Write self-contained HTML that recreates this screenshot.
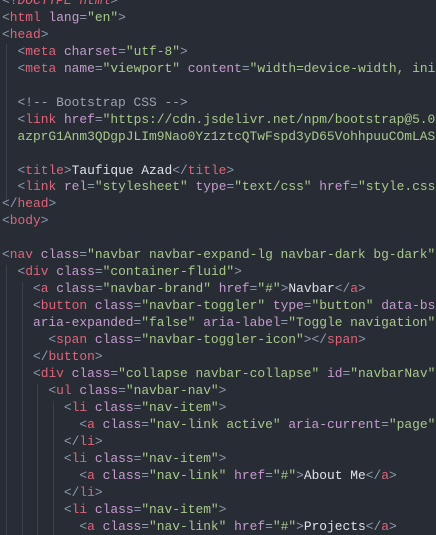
<!DOCTYPE html>
<html><head><meta charset="utf-8"><style>
html,body{margin:0;padding:0;background:#282c34;width:436px;height:535px;overflow:hidden}
pre{margin:0;position:absolute;left:2px;top:-7px;width:434px;height:542px;overflow:hidden;font-family:"Liberation Mono","DejaVu Sans Mono",monospace;font-size:12.9px;line-height:16.95px;color:#d7dae0;white-space:pre}
.b{color:#8e9bb0}.t{color:#e0647a}.a{color:#c59bd0}.s{color:#a8c98c}.c{color:#9aa3b0}.x{color:#dfe3e8}
.g{position:absolute;width:1px;background:#3c424c}
</style></head><body>
<div class="g" style="left:6px;top:44px;height:161px"></div>
<div class="g" style="left:6px;top:265px;height:270px"></div>
<div class="g" style="left:22px;top:282px;height:253px"></div>
<div class="g" style="left:37px;top:384px;height:151px"></div>
<div class="g" style="left:53px;top:401px;height:134px"></div>
<pre><span class="b">&lt;!</span><span class="t" style="font-style:italic">DOCTYPE html</span><span class="b">&gt;</span>
<span class="b">&lt;</span><span class="t">html</span> <span class="a">lang</span><span class="b">=</span><span class="s">"en"</span><span class="b">&gt;</span>
<span class="b">&lt;</span><span class="t">head</span><span class="b">&gt;</span>
  <span class="b">&lt;</span><span class="t">meta</span> <span class="a">charset</span><span class="b">=</span><span class="s">"utf-8"</span><span class="b">&gt;</span>
  <span class="b">&lt;</span><span class="t">meta</span> <span class="a">name</span><span class="b">=</span><span class="s">"viewport"</span> <span class="a">content</span><span class="b">=</span><span class="s">"width=device-width, initial-scale=1"</span>

  <span class="c">&lt;!-- Bootstrap CSS --&gt;</span>
  <span class="b">&lt;</span><span class="t">link</span> <span class="a">href</span><span class="b">=</span><span class="s">"https://cdn.jsdelivr.net/npm/bootstrap@5.0.2/dist</span>
<span class="s">  azprG1Anm3QDgpJLIm9Nao0Yz1ztcQTwFspd3yD65VohhpuuCOmLASjC</span>

  <span class="b">&lt;</span><span class="t">title</span><span class="b">&gt;</span><span class="x">Taufique Azad</span><span class="b">&lt;/</span><span class="t">title</span><span class="b">&gt;</span>
  <span class="b">&lt;</span><span class="t">link</span> <span class="a">rel</span><span class="b">=</span><span class="s">"stylesheet"</span> <span class="a">type</span><span class="b">=</span><span class="s">"text/css"</span> <span class="a">href</span><span class="b">=</span><span class="s">"style.css"</span><span class="b">&gt;</span>
<span class="b">&lt;/</span><span class="t">head</span><span class="b">&gt;</span>
<span class="b">&lt;</span><span class="t">body</span><span class="b">&gt;</span>

<span class="b">&lt;</span><span class="t">nav</span> <span class="a">class</span><span class="b">=</span><span class="s">"navbar navbar-expand-lg navbar-dark bg-dark"</span><span class="b">&gt;</span>
  <span class="b">&lt;</span><span class="t">div</span> <span class="a">class</span><span class="b">=</span><span class="s">"container-fluid"</span><span class="b">&gt;</span>
    <span class="b">&lt;</span><span class="t">a</span> <span class="a">class</span><span class="b">=</span><span class="s">"navbar-brand"</span> <span class="a">href</span><span class="b">=</span><span class="s">"#"</span><span class="b">&gt;</span><span class="x">Navbar</span><span class="b">&lt;/</span><span class="t">a</span><span class="b">&gt;</span>
    <span class="b">&lt;</span><span class="t">button</span> <span class="a">class</span><span class="b">=</span><span class="s">"navbar-toggler"</span> <span class="a">type</span><span class="b">=</span><span class="s">"button"</span> <span class="a">data-bs-toggle</span>
    <span class="a">aria-expanded</span><span class="b">=</span><span class="s">"false"</span> <span class="a">aria-label</span><span class="b">=</span><span class="s">"Toggle navigation"</span><span class="b">&gt;</span>
      <span class="b">&lt;</span><span class="t">span</span> <span class="a">class</span><span class="b">=</span><span class="s">"navbar-toggler-icon"</span><span class="b">&gt;&lt;/</span><span class="t">span</span><span class="b">&gt;</span>
    <span class="b">&lt;/</span><span class="t">button</span><span class="b">&gt;</span>
    <span class="b">&lt;</span><span class="t">div</span> <span class="a">class</span><span class="b">=</span><span class="s">"collapse navbar-collapse"</span> <span class="a">id</span><span class="b">=</span><span class="s">"navbarNav"</span><span class="b">&gt;</span>
      <span class="b">&lt;</span><span class="t">ul</span> <span class="a">class</span><span class="b">=</span><span class="s">"navbar-nav"</span><span class="b">&gt;</span>
        <span class="b">&lt;</span><span class="t">li</span> <span class="a">class</span><span class="b">=</span><span class="s">"nav-item"</span><span class="b">&gt;</span>
          <span class="b">&lt;</span><span class="t">a</span> <span class="a">class</span><span class="b">=</span><span class="s">"nav-link active"</span> <span class="a">aria-current</span><span class="b">=</span><span class="s">"page"</span> <span class="a">href</span>
        <span class="b">&lt;/</span><span class="t">li</span><span class="b">&gt;</span>
        <span class="b">&lt;</span><span class="t">li</span> <span class="a">class</span><span class="b">=</span><span class="s">"nav-item"</span><span class="b">&gt;</span>
          <span class="b">&lt;</span><span class="t">a</span> <span class="a">class</span><span class="b">=</span><span class="s">"nav-link"</span> <span class="a">href</span><span class="b">=</span><span class="s">"#"</span><span class="b">&gt;</span><span class="x">About Me</span><span class="b">&lt;/</span><span class="t">a</span><span class="b">&gt;</span>
        <span class="b">&lt;/</span><span class="t">li</span><span class="b">&gt;</span>
        <span class="b">&lt;</span><span class="t">li</span> <span class="a">class</span><span class="b">=</span><span class="s">"nav-item"</span><span class="b">&gt;</span>
          <span class="b">&lt;</span><span class="t">a</span> <span class="a">class</span><span class="b">=</span><span class="s">"nav-link"</span> <span class="a">href</span><span class="b">=</span><span class="s">"#"</span><span class="b">&gt;</span><span class="x">Projects</span><span class="b">&lt;/</span><span class="t">a</span><span class="b">&gt;</span>
</pre>
</body></html>
